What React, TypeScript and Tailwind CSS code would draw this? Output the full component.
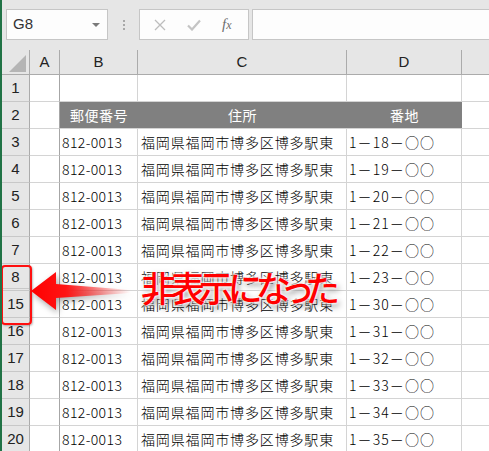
import React from "react";

const ROWS = [1, 2, 3, 4, 5, 6, 7, 8, 15, 16, 17, 18, 19, 20];
const JP = "font-['Noto_Sans_CJK_JP','Noto_Sans',sans-serif]";
const HEAD = "font-['Liberation_Sans','Noto_Sans_CJK_JP',sans-serif]";

function Toolbar() {
  return (
    <div className="flex h-[50px] items-start bg-[#e6e6e6] pt-[9px]">
      <div className="ml-[4px] flex h-[31px] w-[102px] items-center justify-between border border-[#c6c6c6] bg-[#fdfdfd] pl-[6px] pr-[7px]">
        <span className={`${HEAD} text-[15px] text-[#333]`}>G8</span>
        <span className="h-0 w-0 border-x-[4px] border-t-[4px] border-x-transparent border-t-[#7a7a7a]" />
      </div>
      <div className="flex h-[31px] w-[31px] flex-col items-center justify-center gap-[2px]">
        <span className="h-[2px] w-[2px] bg-[#a8a8a8]" />
        <span className="h-[2px] w-[2px] bg-[#a8a8a8]" />
        <span className="h-[2px] w-[2px] bg-[#a8a8a8]" />
      </div>
      <div className="flex h-[31px] w-[110px] items-center border border-[#c6c6c6] bg-[#fdfdfd]">
        <svg width="12" height="12" viewBox="0 0 12 12" className="ml-[14px]">
          <path d="M1 1L11 11M11 1L1 11" stroke="#bdbdbd" strokeWidth="1.3" />
        </svg>
        <svg width="14" height="12" viewBox="0 0 14 12" className="ml-[21px]">
          <path d="M1 6.5L5 10.5L13 1.5" stroke="#c4c4c4" strokeWidth="2.2" fill="none" />
        </svg>
        <span className="ml-[21px] font-['Liberation_Serif',serif] text-[15px] italic text-[#6e6e6e]">
          f<span className="text-[12px]">x</span>
        </span>
      </div>
      <div className="ml-[3px] h-[31px] flex-1 border border-r-0 border-[#c6c6c6] bg-[#fdfdfd]" />
    </div>
  );
}

function ColumnHeader() {
  const cols = [
    { l: "A", w: "w-[30px]" },
    { l: "B", w: "w-[78px]" },
    { l: "C", w: "w-[209px]" },
    { l: "D", w: "w-[115px]" },
  ];
  return (
    <div className={`${HEAD} flex h-[25px] border-b border-[#ababab] bg-[#e6e6e6] text-[15px] text-[#222]`}>
      <div className="relative w-[28px] border-r border-[#ababab]">
        <svg width="17" height="17" viewBox="0 0 17 17" className="absolute left-[7px] top-[5px]">
          <path d="M17 0V17H0Z" fill="#b5b5b5" />
        </svg>
      </div>
      {cols.map((c) => (
        <div key={c.l} className={`${c.w} flex items-center justify-center border-r border-[#ababab]`}>
          {c.l}
        </div>
      ))}
      <div className="flex-1" />
    </div>
  );
}

function Row({ n }: { n: number }) {
  const header = n === 2;
  const data = n >= 3;
  const grid = "border-b border-r border-[#d4d4d4]";
  return (
    <div className="flex h-[27px]">
      <div
        className={`${HEAD} relative flex w-[28px] items-center justify-center border-b border-r border-b-[#c8c8c8] border-r-[#ababab] bg-[#e6e6e6] text-[15px] text-[#222]`}
      >
        {n}
        {n === 8 && <div className="absolute bottom-[1px] left-0 right-0 h-px bg-[#c8c8c8]" />}
      </div>
      <div className="w-[30px] border-b border-r border-b-[#d4d4d4] border-r-[#a6a6a6]" />
      {header ? (
        <>
          <div className={`${JP} flex w-[78px] items-center justify-center border-b border-b-[#d4d4d4] bg-[#808080] text-[14px] tracking-[0.5px] text-white`}>
            郵便番号
          </div>
          <div className={`${JP} flex w-[209px] items-center justify-center border-b border-b-[#d4d4d4] bg-[#808080] text-[14px] tracking-[0.5px] text-white`}>
            住所
          </div>
          <div className={`${JP} flex w-[115px] items-center justify-center border-b border-b-[#d4d4d4] bg-[#808080] text-[14px] tracking-[0.5px] text-white`}>
            番地
          </div>
        </>
      ) : (
        <>
          <div className={`${JP} ${grid} flex w-[78px] items-center pl-[2px] pt-[1px] text-[14px] font-light tracking-[0.4px] text-black`}>
            {data ? "812-0013" : ""}
          </div>
          <div className={`${JP} ${grid} flex w-[209px] items-center pl-[3px] pt-[1px] text-[14px] font-light tracking-[0.85px] text-black`}>
            {data ? "福岡県福岡市博多区博多駅東" : ""}
          </div>
          <div className={`${JP} ${grid} flex w-[115px] items-center pl-[2px] pt-[1px] text-[14px] font-light tracking-[1.1px] text-black`}>
            {data ? `1－${n + 15}－○○` : ""}
          </div>
        </>
      )}
      <div className="flex-1 border-b border-[#d4d4d4]" />
    </div>
  );
}

export default function App() {
  return (
    <div className="relative h-[451px] w-[489px] overflow-hidden border-l-2 border-[#217346] bg-white">
      <Toolbar />
      <ColumnHeader />
      {ROWS.map((n) => (
        <Row key={n} n={n} />
      ))}

      <div className="pointer-events-none absolute left-[-1px] top-[265px] h-[60px] w-[31px] rounded-[4px] border-2 border-[#ff1010] shadow-[1px_1px_2px_rgba(0,0,0,0.25)]" />

      <svg
        width="489"
        height="451"
        viewBox="0 0 489 451"
        className="pointer-events-none absolute left-[-2px] top-0 drop-shadow-[2px_3px_3px_rgba(0,0,0,0.35)]"
      >
        <defs>
          <linearGradient id="arrowFill" x1="31" y1="0" x2="131" y2="0" gradientUnits="userSpaceOnUse">
            <stop offset="0" stopColor="#ff0000" />
            <stop offset="0.35" stopColor="#ff1414" />
            <stop offset="1" stopColor="#ff3030" stopOpacity="0" />
          </linearGradient>
        </defs>
        <polygon
          points="31,291 56,272 56,284 131,290 131,293 56,298 56,310"
          fill="url(#arrowFill)"
        />
      </svg>

      <div
        className={`${JP} pointer-events-none absolute left-[139px] top-[269px] text-[35px] font-medium leading-none tracking-[-6px] text-[#ff0000] [font-feature-settings:'palt'] [text-shadow:0_0_2px_#fff,0_0_3px_#fff,0_0_4px_#fff,2px_3px_6px_rgba(0,0,0,0.5)]`}
      >
        非表示になった
      </div>
    </div>
  );
}
